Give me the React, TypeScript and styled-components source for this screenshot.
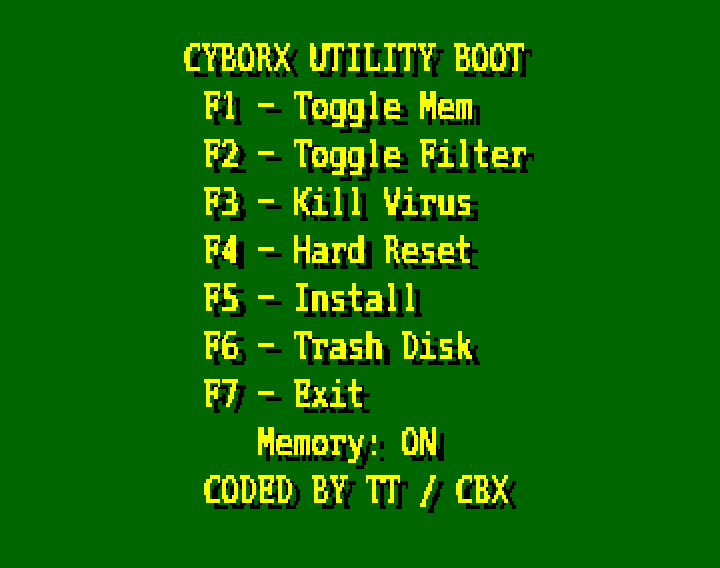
import React from "react";
import styled, { createGlobalStyle } from "styled-components";

const GlobalStyle = createGlobalStyle`
  html, body { margin: 0; padding: 0; background: #006600; }
`;

const Screen = styled.main`
  width: 720px;
  height: 568px;
  box-sizing: border-box;
  padding-top: 35px;
  overflow: hidden;
  background: #006600;
`;

const Lines = styled.div`
  width: 720px;
  height: 520px;
  filter: url(#pixel-text);
`;

const Line = styled.div<{ $indent: number }>`
  height: 48px;
  margin-left: ${(p) => p.$indent}px;
  width: 600px;
  transform: scaleX(0.8);
  transform-origin: left top;
  color: #ffff00;
  font: 400 37.4px/48px "DejaVu Sans Mono", monospace;
  letter-spacing: -0.016px;
  white-space: pre;
  -webkit-text-stroke: 0.6px #ffff00;
`;

const Slab = styled.span<{ $scale: number }>`
  display: inline-flex;
  justify-content: center;
  width: 22.5px;
  letter-spacing: 0;
  font-family: "DejaVu Serif", serif;
  transform: scaleX(${(p) => p.$scale});
  -webkit-text-stroke: 0.5px #ffff00;
`;

const Dash = styled.span`
  display: inline-block;
  width: 13.5px;
  margin: 0 4.5px;
  letter-spacing: 0;
  font-family: "DejaVu Sans", sans-serif;
  transform: translateY(-4px) scaleX(1.66);
  -webkit-text-stroke: 0.8px #ffff00;
`;

const Defs = styled.svg`
  display: block;
  width: 0;
  height: 0;
`;

const slabs: Record<string, number> = {
  B: 0.74, D: 0.7, E: 0.76, F: 0.8, T: 0.84, Y: 0.8, L: 0.84, R: 0.72, r: 1.05, l: 1, "1": 1,
};

const lines: { indent: number; text: string }[] = [
  { indent: 182, text: "CYBORX UTILITY BOOT" },
  { indent: 202, text: "F1 - Toggle Mem" },
  { indent: 202, text: "F2 - Toggle Filter" },
  { indent: 202, text: "F3 - Kill Virus" },
  { indent: 202, text: "F4 - Hard Reset" },
  { indent: 202, text: "F5 - Install" },
  { indent: 202, text: "F6 - Trash Disk" },
  { indent: 202, text: "F7 - Exit" },
  { indent: 256, text: "Memory: ON" },
  { indent: 202, text: "CODED BY TT / CBX" },
];

const renderText = (text: string) =>
  text.split(/([BDEFTYLRrl1-])/).map((part, i) => {
    if (part === "-") return <Dash key={i}>-</Dash>;
    return slabs[part] ? <Slab key={i} $scale={slabs[part]}>{part}</Slab> : part;
  });

export default function App() {
  return (
    <Screen>
      <GlobalStyle />
      <Defs aria-hidden="true">
        {/* Samples the text once per 2x4 block, grows each sample to the block, adds a hard shadow. */}
        <filter id="pixel-text" filterUnits="userSpaceOnUse" x="0" y="0" width="720" height="520" colorInterpolationFilters="sRGB">
          <feFlood x="0" y="2" width="1" height="1" floodColor="#000" result="dot" />
          <feOffset in="dot" dx="0" dy="0" x="0" y="0" width="2" height="4" result="cell" />
          <feTile in="cell" result="grid" />
          <feOffset in="SourceGraphic" dx="1" result="right" />
          <feMerge result="bold"><feMergeNode in="SourceGraphic" /><feMergeNode in="right" /></feMerge>
          <feComposite in="bold" in2="grid" operator="in" />
          <feComponentTransfer result="samples">
            <feFuncA type="discrete" tableValues="0 1" />
          </feComponentTransfer>
          <feOffset in="samples" dx="1" dy="0" result="s1" />
          <feMerge result="w2"><feMergeNode in="samples" /><feMergeNode in="s1" /></feMerge>
          <feOffset in="w2" dy="-2" result="a" />
          <feOffset in="w2" dy="-1" result="b" />
          <feOffset in="w2" dy="1" result="c" />
          <feMerge result="pixels">
            <feMergeNode in="a" /><feMergeNode in="b" /><feMergeNode in="w2" /><feMergeNode in="c" />
          </feMerge>
          <feColorMatrix in="pixels" values="0 0 0 0 1  0 0 0 0 1  0 0 0 0 0  0 0 0 1 0" result="face" />
          <feColorMatrix in="pixels" values="0 0 0 0 0  0 0 0 0 0  0 0 0 0 0  0 0 0 1 0" result="black" />
          <feOffset in="black" dx="8" dy="6" result="shadow" />
          <feMerge><feMergeNode in="shadow" /><feMergeNode in="face" /></feMerge>
        </filter>
      </Defs>
      <Lines>
        {lines.map((l) => (
          <Line key={l.text} $indent={l.indent}>{renderText(l.text)}</Line>
        ))}
      </Lines>
    </Screen>
  );
}
